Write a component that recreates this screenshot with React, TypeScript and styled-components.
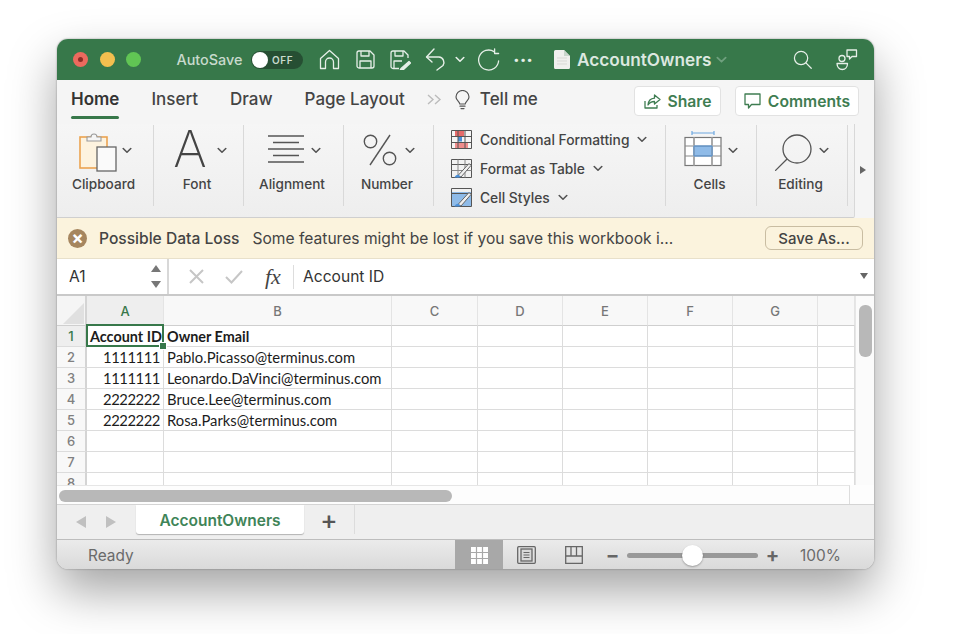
import styled, { createGlobalStyle } from 'styled-components';

const GREEN = '#37784a';
const UI_FONT = '"Inter", "Liberation Sans", sans-serif';
const CELL_FONT = '"Lato", "Open Sans", sans-serif';
const COLUMNS = '30px 77px 228px 86px 85px 85px 85px 85px 37px';

const GlobalStyle = createGlobalStyle`
    html, body {
        margin: 0;
        background: #fff;
        font-family: ${UI_FONT};
    }
`;

const Chevron = ({ size = 10, color = '#555' }: { size?: number; color?: string }) => (
    <svg width={size} height={size * 0.7} viewBox="0 0 10 7" fill="none">
        <path d="M1.2 1.5 5 5.2l3.8-3.7" stroke={color} strokeWidth="1.6" strokeLinecap="round" strokeLinejoin="round" />
    </svg>
);

const HomeIcon = () => (
    <svg width="21" height="21" viewBox="0 0 21 21" fill="none" stroke="#e6efe8" strokeWidth="1.3" strokeLinejoin="round">
        <path d="M1.5 9.5 10.5 1.5l9 8v10h-5v-6.5a4 4 0 0 0-8 0V19.5h-5z" />
    </svg>
);

const SaveIcon = () => (
    <svg width="19" height="19" viewBox="0 0 19 19" fill="none" stroke="#e6efe8" strokeWidth="1.3" strokeLinejoin="round">
        <path d="M1 3a2 2 0 0 1 2-2h11l4 4v11a2 2 0 0 1-2 2H3a2 2 0 0 1-2-2z" />
        <path d="M5 1v5h8V1M4 18v-7h11v7" />
    </svg>
);

const SaveAsIcon = () => (
    <svg width="21" height="20" viewBox="0 0 21 20" fill="none" stroke="#e6efe8" strokeWidth="1.3" strokeLinejoin="round">
        <path d="M9 18.5H3a2 2 0 0 1-2-2V3a2 2 0 0 1 2-2h11l4 4v3" />
        <path d="M5 1v5h8V1M4 18v-7h8" />
        <path d="m11 18.5 8-7 1.5 1.5-7.5 7-3 .5z" fill="#e6efe8" />
    </svg>
);

const UndoIcon = () => (
    <svg width="21" height="23" viewBox="0 0 21 23" fill="none" stroke="#e6efe8" strokeWidth="1.4" strokeLinecap="round" strokeLinejoin="round">
        <path d="M9 1 1.5 9 7 14" />
        <path d="M2 9h12a5.5 5.5 0 0 1 4 8.500L12 22" />
    </svg>
);

const RedoIcon = () => (
    <svg width="23" height="23" viewBox="0 0 23 23" fill="none" stroke="#e6efe8" strokeWidth="1.3" strokeLinecap="round" strokeLinejoin="round">
        <path d="M17 3.6A10 10 0 1 0 21.6 13" />
        <path d="M17.6 0.8V5.5h4" />
    </svg>
);

const DocIcon = () => (
    <svg width="16" height="19" viewBox="0 0 16 19">
        <path d="M0 1.5A1.5 1.5 0 0 1 1.5 0H10l6 6v11.5a1.5 1.5 0 0 1-1.5 1.5h-13A1.5 1.5 0 0 1 0 17.5z" fill="#f0f0ee" />
        <path d="M10 0v6h6z" fill="#c9d6cc" />
        <path d="M3 8h10M3 11h10M3 14h10" stroke="#d9d9d6" strokeWidth="1" />
    </svg>
);

const SearchIcon = ({ size, color, sw }: { size: number; color: string; sw: number }) => (
    <svg width={size} height={size} viewBox="0 0 20 20" fill="none" stroke={color} strokeWidth={sw} strokeLinecap="round">
        <circle cx="8.5" cy="8.5" r="7" />
        <path d="m13.6 13.6 5.6 5.6" />
    </svg>
);

const CoauthorIcon = () => (
    <svg width="22" height="22" viewBox="0 0 22 22" fill="none" stroke="#e6efe8" strokeWidth="1.3" strokeLinejoin="round">
        <circle cx="6" cy="9.5" r="3" />
        <path d="M1 14.5h10.5c0 3.5-2.2 6-5.2 6S1 18 1 14.5z" />
        <path d="M11 1h9.5v6.5h-4.5l-2.5 2.5V7.5H11z" />
    </svg>
);

const ShareIcon = () => (
    <svg width="17" height="15" viewBox="0 0 17 15" fill="none" stroke="#3f7d52" strokeWidth="1.3" strokeLinejoin="round">
        <path d="M1 7v7h12v-3" />
        <path d="M10.5 1 16 5.5 10.5 10V7.5C7.5 7.5 5.5 8.5 4 11c.3-3.8 2.5-6.500 6.5-6.800z" />
    </svg>
);

const CommentIcon = () => (
    <svg width="17" height="16" viewBox="0 0 17 16" fill="none" stroke="#3f7d52" strokeWidth="1.3" strokeLinejoin="round">
        <path d="M1 1h15v10.5H7.5L4.5 15v-3.5H1z" />
    </svg>
);

const OverflowIcon = () => (
    <svg width="15" height="11" viewBox="0 0 15 11" fill="none" stroke="#bcbcbc" strokeWidth="1.4">
        <path d="m1 1 5 4.5L1 10M8 1l5 4.5L8 10" />
    </svg>
);

const BulbIcon = () => (
    <svg width="15" height="20" viewBox="0 0 15 20" fill="none" stroke="#555" strokeWidth="1.2" strokeLinecap="round">
        <path d="M4.8 14C4.6 11.5 1 10.5 1 7a6.5 6.5 0 0 1 13 0c0 3.5-3.6 4.5-3.8 7z" />
        <path d="M5 16.2h5M6 18.6h3" />
    </svg>
);

const ClipboardIcon = () => (
    <svg width="38" height="40" viewBox="0 0 38 40" fill="none">
        <rect x="1" y="5" width="27" height="31" fill="#fdf3df" stroke="#eba350" strokeWidth="1.6" />
        <path d="M8 9V5h4a3 3 0 0 1 6 0h4v4z" fill="#f5f5f5" stroke="#9a9a9a" strokeWidth="1.1" />
        <rect x="18" y="15" width="19" height="24" fill="#fafafa" stroke="#666" strokeWidth="1.3" />
    </svg>
);

const AlignIcon = () => (
    <svg width="38" height="28" viewBox="0 0 38 28" stroke="#555" strokeWidth="1.3">
        <path d="M1 1h36M6 7.5h26M1 14h36M6 20.5h26M1 27h36" />
    </svg>
);

const PercentIcon = () => (
    <svg width="34" height="32" viewBox="0 0 34 32" fill="none" stroke="#555" strokeWidth="1.4">
        <circle cx="7.5" cy="7.5" r="6.2" />
        <circle cx="26.5" cy="24.5" r="6.2" />
        <path d="M27 1 7 31" />
    </svg>
);

const CondFormatIcon = () => (
    <svg width="21" height="19" viewBox="0 0 21 19" fill="none">
        <rect x="4" y="1" width="9" height="5" fill="#e66b6b" />
        <rect x="7" y="6.5" width="4" height="5" fill="#4a90d9" />
        <rect x="4" y="12" width="13" height="6" fill="#ef8d8d" />
        <path d="M.5.5h20v18H.5zM.5 6.5h20M.5 12.5h20M7 .5v18M14 .5v18" stroke="#555" strokeWidth="1" />
    </svg>
);

const TableBrushIcon = ({ filled }: { filled: boolean }) => (
    <svg width="21" height="19" viewBox="0 0 21 19" fill="none">
        {filled && <rect x="1" y="4" width="19" height="14" fill="#8fbbe8" />}
        <path d="M.5.5h20v18H.5zM.5 5.5h20" stroke="#555" strokeWidth="1" />
        {!filled && <path d="M.5 11.5h20M7 .5v18M14 .5v18" stroke="#888" strokeWidth="1" />}
        <path d="M7 16.5 18 4.5l2 2L10 18z" fill="#f0f0f0" stroke="#666" strokeWidth="1" />
        <path d="M3.5 18.5c1-2 2.5-3 4-2.5l2 1.5-1 1z" fill="#4a90d9" />
    </svg>
);

const CellsIcon = () => (
    <svg width="38" height="36" viewBox="0 0 38 36" fill="none">
        <path d="M8 2h22M8 0v4M30 0v4" stroke="#6fa8e0" strokeWidth="1.2" />
        <rect x="1" y="6.5" width="36" height="28" fill="#fff" stroke="#777" strokeWidth="1.2" />
        <rect x="10" y="15" width="18" height="10" fill="#8fbbe8" />
        <path d="M1 15h36M1 25h36" stroke="#8a8a8a" strokeWidth="1.2" />
        <path d="M10 6.5v28M28 6.5v28" stroke="#aaa" strokeWidth="2" />
        <path d="M10 15h18v10H10z" stroke="#4a90d9" strokeWidth="1" />
    </svg>
);

const CancelIcon = () => (
    <svg width="15" height="15" viewBox="0 0 15 15" fill="none" stroke="#c6c6c6" strokeWidth="2">
        <path d="m1 1 13 13M14 1 1 14" />
    </svg>
);

const CheckIcon = () => (
    <svg width="18" height="14" viewBox="0 0 18 14" fill="none" stroke="#c6c6c6" strokeWidth="2">
        <path d="m1 7 5.5 5.5L17 1" />
    </svg>
);

const NormalViewIcon = () => (
    <svg width="17" height="17" viewBox="0 0 17 17">
        <rect width="17" height="17" fill="#fff" />
        <path d="M0 5.5h17M0 11.5h17M5.5 0v17M11.5 0v17" stroke="#a8a8a8" strokeWidth="1.2" />
    </svg>
);

const PageViewIcon = () => (
    <svg width="19" height="18" viewBox="0 0 19 18" fill="none" stroke="#666" strokeWidth="1.3">
        <rect x=".7" y=".7" width="17.6" height="16.6" rx="1" />
        <rect x="4" y="3" width="11" height="12" fill="#d8d8d8" />
        <path d="M6.5 6.5h6M6.5 9h6M6.5 11.5h6" strokeWidth="1" />
    </svg>
);

const BreakViewIcon = () => (
    <svg width="18" height="18" viewBox="0 0 18 18" fill="none" stroke="#666" strokeWidth="1.3">
        <path d="M.7.7h16.6v16.6H.7zM.7 10h16.6M6 .7V10M11.5.7V10" />
    </svg>
);

const columnLabels = ['A', 'B', 'C', 'D', 'E', 'F', 'G', ''];

const rows: [string, string][] = [
    ['Account ID', 'Owner Email'],
    ['1111111', 'Pablo.Picasso@terminus.com'],
    ['1111111', 'Leonardo.DaVinci@terminus.com'],
    ['2222222', 'Bruce.Lee@terminus.com'],
    ['2222222', 'Rosa.Parks@terminus.com'],
    ['', ''],
    ['', ''],
    ['', ''],
];

export default function App() {
    return (
        <>
            <GlobalStyle />
            <Page>
                <Window>
                    <TitleBar>
                        <Light $color="#ec6a5e"><LightDot /></Light>
                        <Light $color="#f4bf4f" />
                        <Light $color="#61c554" />
                        <AutoSave>AutoSave</AutoSave>
                        <Toggle>
                            <ToggleKnob />
                            OFF
                        </Toggle>
                        <TitleSlot $w={36} $ml={8}><HomeIcon /></TitleSlot>
                        <TitleSlot $w={36}><SaveIcon /></TitleSlot>
                        <TitleSlot $w={35}><SaveAsIcon /></TitleSlot>
                        <TitleSlot $w={34}><UndoIcon /></TitleSlot>
                        <TitleSlot $w={16}><Chevron color="#e6efe8" /></TitleSlot>
                        <TitleSlot $w={36} $ml={2}><RedoIcon /></TitleSlot>
                        <Dots>···</Dots>
                        <TitleSlot $w={16} $ml={14}><DocIcon /></TitleSlot>
                        <DocTitle>AccountOwners</DocTitle>
                        <TitleSlot $w={12} $ml={4}><Chevron size={11} color="#6fa07e" /></TitleSlot>
                        <TitleRight>
                            <TitleSlot $w={20}><SearchIcon size={19} color="#e6efe8" sw={1.3} /></TitleSlot>
                            <TitleSlot $w={22}><CoauthorIcon /></TitleSlot>
                        </TitleRight>
                    </TitleBar>

                    <TabRow>
                        <Tab $active>Home</Tab>
                        <Tab>Insert</Tab>
                        <Tab>Draw</Tab>
                        <Tab>Page Layout</Tab>
                        <OverflowSlot><OverflowIcon /></OverflowSlot>
                        <BulbSlot><BulbIcon /></BulbSlot>
                        <TellMe>Tell me</TellMe>
                        <TabActions>
                            <ActionButton $w={87}><ShareIcon />Share</ActionButton>
                            <ActionButton $w={124}><CommentIcon />Comments</ActionButton>
                        </TabActions>
                    </TabRow>

                    <RibbonWrap>
                        <Ribbon>
                            <BigGroup $w={97}>
                                <BigIconRow $gap={5}><ClipboardIcon /><Chevron /></BigIconRow>
                                <GroupLabel>Clipboard</GroupLabel>
                            </BigGroup>
                            <BigGroup $w={90}>
                                <BigIconRow><FontGlyph>A</FontGlyph><Chevron /></BigIconRow>
                                <GroupLabel>Font</GroupLabel>
                            </BigGroup>
                            <BigGroup $w={100}>
                                <BigIconRow>
                                    <IconLift $by={6}><AlignIcon /></IconLift>
                                    <Chevron />
                                </BigIconRow>
                                <GroupLabel>Alignment</GroupLabel>
                            </BigGroup>
                            <BigGroup $w={90}>
                                <BigIconRow $gap={8}>
                                    <IconLift $by={4}><PercentIcon /></IconLift>
                                    <Chevron />
                                </BigIconRow>
                                <GroupLabel>Number</GroupLabel>
                            </BigGroup>
                            <StyleGroup>
                                <StyleRow><CondFormatIcon />Conditional Formatting<Chevron /></StyleRow>
                                <StyleRow><TableBrushIcon filled={false} />Format as Table<Chevron /></StyleRow>
                                <StyleRow><TableBrushIcon filled />Cell Styles<Chevron /></StyleRow>
                            </StyleGroup>
                            <BigGroup $w={91}>
                                <BigIconRow><IconLift $by={6}><CellsIcon /></IconLift><Chevron /></BigIconRow>
                                <GroupLabel>Cells</GroupLabel>
                            </BigGroup>
                            <BigGroup $w={91}>
                                <BigIconRow $gap={5}>
                                    <MirroredSearch><SearchIcon size={40} color="#555" sw={0.65} /></MirroredSearch>
                                    <Chevron />
                                </BigIconRow>
                                <GroupLabel>Editing</GroupLabel>
                            </BigGroup>
                        </Ribbon>
                        <RibbonMore />
                    </RibbonWrap>

                    <Warning>
                        <WarningIcon>×</WarningIcon>
                        <WarningTitle>Possible Data Loss</WarningTitle>
                        <WarningText>Some features might be lost if you save this workbook i...</WarningText>
                        <SaveAs>Save As...</SaveAs>
                    </Warning>

                    <FormulaBar>
                        <NameBox>
                            A1
                            <Stepper>
                                <StepUp />
                                <StepDown />
                            </Stepper>
                        </NameBox>
                        <FormulaMark $ml={18}><CancelIcon /></FormulaMark>
                        <FormulaMark $ml={20}><CheckIcon /></FormulaMark>
                        <Fx>fx</Fx>
                        <FormulaValue>Account ID</FormulaValue>
                        <FormulaArrow />
                    </FormulaBar>

                    <GridArea>
                        <Sheet>
                            <HeaderRow>
                                <Corner><CornerMark /></Corner>
                                {columnLabels.map((label, i) => (
                                    <ColumnHead key={i} $active={label === 'A'}>{label}</ColumnHead>
                                ))}
                            </HeaderRow>
                            {rows.map(([id, email], i) => (
                                <Row key={i}>
                                    <RowHead $active={i === 0}>{i + 1}</RowHead>
                                    <Cell $bold={i === 0} $right={i > 0}>{id}</Cell>
                                    <Cell $bold={i === 0}>{email}</Cell>
                                    <Cell /><Cell /><Cell /><Cell /><Cell /><Cell />
                                </Row>
                            ))}
                            <Selection><FillHandle /></Selection>
                        </Sheet>
                        <VScroll><VThumb /></VScroll>
                    </GridArea>

                    <HScroll>
                        <HTrack><HThumb /></HTrack>
                    </HScroll>

                    <SheetBar>
                        <SheetArrow $dir="left" />
                        <SheetArrow $dir="right" />
                        <SheetTab>AccountOwners</SheetTab>
                        <AddSheet>+</AddSheet>
                    </SheetBar>

                    <StatusBar>
                        <Ready>Ready</Ready>
                        <ViewButton $active><NormalViewIcon /></ViewButton>
                        <ViewButton><PageViewIcon /></ViewButton>
                        <ViewButton><BreakViewIcon /></ViewButton>
                        <ZoomMark $ml={8}>−</ZoomMark>
                        <ZoomTrack><ZoomThumb /></ZoomTrack>
                        <ZoomMark $ml={7}>+</ZoomMark>
                        <ZoomValue>100%</ZoomValue>
                    </StatusBar>
                </Window>
            </Page>
        </>
    );
}

const Page = styled.div`
    width: 956px;
    height: 634px;
    padding: 39px 0 0 57px;
    box-sizing: border-box;
    overflow: hidden;
`;

const Window = styled.div`
    width: 817px;
    height: 530px;
    display: flex;
    flex-direction: column;
    border-radius: 11px;
    overflow: hidden;
    background: #f4f4f4;
    box-shadow: 0 22px 48px rgba(0, 0, 0, 0.36), 0 0 2px rgba(0, 0, 0, 0.4);
`;

const TitleBar = styled.div`
    height: 41px;
    flex: none;
    display: flex;
    align-items: center;
    padding: 0 16px;
    background: ${GREEN};
    color: #e6efe8;
`;

const Light = styled.div<{ $color: string }>`
    width: 15px;
    height: 15px;
    margin-right: 11.5px;
    border-radius: 50%;
    background: ${({ $color }) => $color};
    display: flex;
    align-items: center;
    justify-content: center;
`;

const LightDot = styled.div`
    width: 5px;
    height: 5px;
    border-radius: 50%;
    background: #8d2c25;
`;

const AutoSave = styled.span`
    margin-left: 24px;
    width: 66px;
    font-size: 14.4px;
    font-weight: 500;
    white-space: nowrap;
    color: #c8dacd;
`;

const Toggle = styled.div`
    margin-left: 8.5px;
    width: 52px;
    height: 18px;
    flex: none;
    box-sizing: border-box;
    padding: 1px 0 0 1px;
    display: flex;
    align-items: center;
    gap: 4px;
    border-radius: 9px;
    background: #264f33;
    font-size: 10px;
    font-weight: 600;
    letter-spacing: 0.6px;
    color: #c8dacd;
`;

const ToggleKnob = styled.div`
    width: 16px;
    height: 16px;
    border-radius: 50%;
    background: #fff;
    margin-top: -1px;
`;

const TitleSlot = styled.div<{ $w: number; $ml?: number }>`
    width: ${({ $w }) => $w}px;
    margin-left: ${({ $ml = 0 }) => $ml}px;
    flex: none;
    display: flex;
    align-items: center;
    justify-content: center;
`;

const Dots = styled.span`
    width: 34px;
    flex: none;
    text-align: center;
    font-size: 20px;
    font-weight: 700;
    line-height: 1;
    color: #e6efe8;
`;

const DocTitle = styled.span`
    margin-left: 7px;
    font-size: 17.2px;
    font-weight: 600;
    color: #dde8e0;
    white-space: nowrap;
`;

const TitleRight = styled.div`
    margin-left: auto;
    display: flex;
    align-items: center;
    gap: 24px;
`;

const TabRow = styled.div`
    height: 44px;
    flex: none;
    display: flex;
    align-items: center;
    padding: 0 15px 0 14px;
    background: #f5f5f5;
`;

const Tab = styled.div<{ $active?: boolean }>`
    position: relative;
    margin-right: 32px;
    padding-bottom: 6px;
    font-size: 17px;
    font-weight: ${({ $active }) => ($active ? 600 : 500)};
    color: ${({ $active }) => ($active ? '#333' : '#444')};
    white-space: nowrap;

    ${({ $active }) =>
        $active &&
        `
        &::after {
            content: '';
            position: absolute;
            left: 0;
            right: 0;
            bottom: -4px;
            height: 3px;
            border-radius: 2px;
            background: ${GREEN};
        }
    `}
`;

const OverflowSlot = styled.div`
    display: flex;
    margin: 0 13px 6px -10px;
`;

const BulbSlot = styled.div`
    display: flex;
    margin-bottom: 5px;
`;

const TellMe = styled.span`
    margin: 0 0 6px 10px;
    font-size: 17px;
    font-weight: 500;
    color: #444;
`;

const TabActions = styled.div`
    margin-left: auto;
    margin-top: -2px;
    display: flex;
    gap: 14px;
`;

const ActionButton = styled.div<{ $w: number }>`
    width: ${({ $w }) => $w}px;
    height: 30px;
    box-sizing: border-box;
    display: flex;
    align-items: center;
    justify-content: center;
    gap: 7px;
    background: #fff;
    border: 1px solid #e2e2e2;
    border-radius: 4px;
    font-size: 15.7px;
    font-weight: 600;
    color: #3f7d52;
`;

const RibbonWrap = styled.div`
    height: 94px;
    flex: none;
    display: flex;
    background: #f5f5f5;
`;

const Ribbon = styled.div`
    width: 798px;
    height: 94px;
    flex: none;
    box-sizing: border-box;
    display: flex;
    align-items: flex-start;
    padding-top: 1px;
    background: linear-gradient(#f6f6f6, #eeeeee);
    border-right: 1px solid #d8d8d8;
    border-bottom: 1px solid #cfcfcf;
    border-bottom-right-radius: 2px;
`;

const BigGroup = styled.div<{ $w: number }>`
    width: ${({ $w }) => $w}px;
    height: 81px;
    flex: none;
    box-sizing: border-box;
    display: flex;
    flex-direction: column;
    align-items: center;
    padding-top: 7px;
    border-right: 1px solid #d9d9d9;
`;

const BigIconRow = styled.div<{ $gap?: number }>`
    height: 40px;
    display: flex;
    align-items: center;
    gap: ${({ $gap = 6 }) => $gap}px;

    > svg:last-child {
        margin-bottom: 4px;
    }
`;

const IconLift = styled.div<{ $by: number }>`
    display: flex;
    margin-bottom: ${({ $by }) => $by}px;
`;

const GroupLabel = styled.div`
    margin: 4px 3px 0 0;
    font-size: 13.6px;
    line-height: 17px;
    font-weight: 500;
    color: #444;
`;

const FontGlyph = styled.span`
    font-size: 51px;
    font-weight: 200;
    line-height: 40px;
    height: 40px;
    color: #444;
    margin: 0 4px 6px 3px;
`;

const MirroredSearch = styled.div`
    display: flex;
    transform: scaleX(-1);
    margin-left: -2px;
`;

const StyleGroup = styled.div`
    width: 232px;
    height: 87px;
    flex: none;
    box-sizing: border-box;
    padding-left: 17px;
    display: grid;
    grid-auto-rows: 29px;
    position: relative;

    &::after {
        content: '';
        position: absolute;
        top: 0;
        right: 0;
        width: 1px;
        height: 81px;
        background: #d9d9d9;
    }
`;

const StyleRow = styled.div`
    display: flex;
    align-items: center;
    gap: 8px;
    font-size: 13.8px;
    font-weight: 500;
    color: #444;
    white-space: nowrap;
`;

const RibbonMore = styled.div`
    margin: 42px 0 0 5px;
    width: 0;
    height: 0;
    border-left: 6px solid #666;
    border-top: 4.5px solid transparent;
    border-bottom: 4.5px solid transparent;
`;

const Warning = styled.div`
    height: 41px;
    flex: none;
    box-sizing: border-box;
    display: flex;
    align-items: center;
    padding: 0 11px;
    background: #fbf3dd;
    border-bottom: 1px solid #e8e0ca;
    color: #444;
`;

const WarningIcon = styled.div`
    width: 19px;
    height: 19px;
    flex: none;
    border-radius: 50%;
    background: #a6865f;
    color: #fff;
    font-size: 18px;
    font-weight: 700;
    line-height: 18px;
    text-align: center;
`;

const WarningTitle = styled.span`
    margin-left: 12px;
    font-size: 15.6px;
    font-weight: 500;
`;

const WarningText = styled.span`
    margin-left: 13px;
    font-size: 15.6px;
    white-space: nowrap;
`;

const SaveAs = styled.div`
    margin-left: auto;
    width: 98px;
    height: 24px;
    box-sizing: border-box;
    display: flex;
    align-items: center;
    justify-content: center;
    border: 1px solid #c9bda2;
    border-radius: 6px;
    font-size: 15px;
    font-weight: 500;
`;

const FormulaBar = styled.div`
    height: 37px;
    flex: none;
    box-sizing: border-box;
    display: flex;
    align-items: center;
    background: #fff;
    border-bottom: 2px solid #c9c9c9;
    position: relative;
`;

const NameBox = styled.div`
    width: 112px;
    height: 35px;
    flex: none;
    box-sizing: border-box;
    display: flex;
    align-items: center;
    justify-content: space-between;
    padding: 0 6px 0 12px;
    border-right: 2px solid #d8d8d8;
    font-size: 15.6px;
    font-weight: 400;
    color: #333;
`;

const Stepper = styled.div`
    display: flex;
    flex-direction: column;
    gap: 9px;
`;

const StepUp = styled.div`
    border-left: 5px solid transparent;
    border-right: 5px solid transparent;
    border-bottom: 7px solid #777;
`;

const StepDown = styled(StepUp)`
    border-bottom: 0;
    border-top: 7px solid #777;
`;

const FormulaMark = styled.span<{ $ml: number }>`
    margin-left: ${({ $ml }) => $ml}px;
    width: 18px;
    display: flex;
    justify-content: center;
`;

const Fx = styled.span`
    margin-left: 22px;
    width: 29px;
    box-sizing: border-box;
    border-right: 1px solid #ddd;
    font-family: 'Liberation Serif', serif;
    font-style: italic;
    font-size: 22px;
    line-height: 24px;
    color: #444;
`;

const FormulaValue = styled.span`
    margin-left: 9px;
    font-size: 15.6px;
    color: #333;
`;

const FormulaArrow = styled.div`
    position: absolute;
    right: 6px;
    top: 14px;
    border-left: 4.5px solid transparent;
    border-right: 4.5px solid transparent;
    border-top: 6px solid #666;
`;

const GridArea = styled.div`
    height: 189px;
    flex: none;
    display: flex;
    background: #fff;
`;

const Sheet = styled.div`
    position: relative;
    width: 798px;
    flex: none;
    overflow: hidden;
`;

const HeaderRow = styled.div`
    height: 30px;
    display: grid;
    grid-template-columns: ${COLUMNS};
`;

const Corner = styled.div`
    box-sizing: border-box;
    background: #f5f5f5;
    border-right: 2px solid #d4d4d4;
    border-bottom: 1px solid #cfcfcf;
    display: flex;
    align-items: flex-end;
    justify-content: flex-end;
    padding: 0 1px 1px 0;
`;

const CornerMark = styled.div`
    border-left: 21px solid transparent;
    border-bottom: 21px solid #e0e0e0;
`;

const ColumnHead = styled.div<{ $active?: boolean }>`
    box-sizing: border-box;
    display: flex;
    align-items: center;
    justify-content: center;
    padding-top: 1px;
    background: ${({ $active }) => ($active ? '#eeeeee' : '#f8f8f8')};
    border-right: 1px solid #e4e4e4;
    border-bottom: 1px solid #cfcfcf;
    font-size: 13px;
    font-weight: 500;
    color: ${({ $active }) => ($active ? GREEN : '#777')};
`;

const Row = styled.div`
    height: 21px;
    display: grid;
    grid-template-columns: ${COLUMNS};
    grid-template-rows: 21px;
`;

const RowHead = styled.div<{ $active?: boolean }>`
    box-sizing: border-box;
    display: flex;
    align-items: center;
    justify-content: center;
    background: ${({ $active }) => ($active ? '#eeeeee' : '#f8f8f8')};
    border-right: 2px solid #d4d4d4;
    border-bottom: 1px solid #dcdcdc;
    font-size: 13px;
    font-weight: 500;
    color: ${({ $active }) => ($active ? GREEN : '#808080')};
`;

const Cell = styled.div<{ $bold?: boolean; $right?: boolean }>`
    box-sizing: border-box;
    min-width: 0;
    height: 21px;
    padding: ${({ $bold }) => ($bold ? 1 : 0)}px 3px 0;
    border-right: 1px solid #dcdcdc;
    border-bottom: 1px solid #dcdcdc;
    font-family: ${CELL_FONT};
    font-size: ${({ $bold }) => ($bold ? 14.4 : 14.8)}px;
    letter-spacing: ${({ $right }) => ($right ? -0.45 : 0)}px;
    line-height: 20px;
    font-weight: ${({ $bold }) => ($bold ? 700 : 400)};
    color: #1c1c1c;
    text-align: ${({ $right }) => ($right ? 'right' : 'left')};
    white-space: nowrap;
`;

const Selection = styled.div`
    position: absolute;
    left: 29px;
    top: 28px;
    width: 78px;
    height: 23px;
    box-sizing: border-box;
    border: 2px solid ${GREEN};
`;

const FillHandle = styled.div`
    position: absolute;
    right: -5px;
    bottom: -5px;
    width: 6px;
    height: 6px;
    background: ${GREEN};
    border: 1px solid #fff;
`;

const VScroll = styled.div`
    flex: 1;
    background: #fbfbfb;
    border-left: 1px solid #e6e6e6;
    padding: 9px 2px 0 3px;
`;

const VThumb = styled.div`
    height: 52px;
    border-radius: 6px;
    background: #b8b8b8;
`;

const HScroll = styled.div`
    height: 20px;
    flex: none;
    box-sizing: border-box;
    background: #fdfdfd;
    border-bottom: 1px solid #d4d4d4;
    padding-right: 24px;
`;

const HTrack = styled.div`
    height: 100%;
    box-sizing: border-box;
    padding: 4px 0 0 2px;
    border-right: 1px solid #ddd;
    border-top: 1px solid #e6e6e6;
`;

const HThumb = styled.div`
    width: 393px;
    height: 12px;
    border-radius: 6px;
    background: #b8b8b8;
`;

const SheetBar = styled.div`
    height: 35px;
    flex: none;
    box-sizing: border-box;
    display: flex;
    align-items: flex-start;
    padding-left: 19px;
    background: #efefef;
    border-bottom: 1px solid #bdbdbd;
`;

const SheetArrow = styled.div<{ $dir: 'left' | 'right' }>`
    margin: 11px 20px 0 0;
    width: 0;
    height: 0;
    border-top: 6.5px solid transparent;
    border-bottom: 6.5px solid transparent;
    ${({ $dir }) => ($dir === 'left' ? 'border-right: 10px solid #c0c0c0;' : 'border-left: 10px solid #c0c0c0;')}
`;

const SheetTab = styled.div`
    width: 168px;
    height: 29px;
    box-sizing: border-box;
    display: flex;
    align-items: center;
    justify-content: center;
    padding-top: 2px;
    background: #fff;
    border-radius: 0 0 3px 3px;
    box-shadow: 0 1px 1px rgba(0, 0, 0, 0.25);
    font-size: 15.5px;
    font-weight: 600;
    color: #3f8458;
`;

const AddSheet = styled.div`
    width: 51px;
    height: 29px;
    box-sizing: border-box;
    display: flex;
    align-items: center;
    justify-content: center;
    border-right: 1px solid #dcdcdc;
    font-size: 26px;
    font-weight: 500;
    color: #555;
`;

const StatusBar = styled.div`
    height: 30px;
    flex: none;
    display: flex;
    align-items: center;
    background: linear-gradient(#ebebeb, #d9d9d9);
    font-size: 15.4px;
    color: #6a6a6a;
`;

const Ready = styled.span`
    margin-left: 31px;
    width: 367px;
    flex: none;
`;

const ViewButton = styled.div<{ $active?: boolean }>`
    width: ${({ $active }) => ($active ? 48 : 47)}px;
    height: 30px;
    flex: none;
    display: flex;
    align-items: center;
    justify-content: center;
    background: ${({ $active }) => ($active ? '#a8a8a8' : 'transparent')};
`;

const ZoomMark = styled.span<{ $ml: number }>`
    margin-left: ${({ $ml }) => $ml}px;
    width: 15px;
    text-align: center;
    font-size: 20px;
    font-weight: 700;
    line-height: 1;
    color: #666;
`;

const ZoomTrack = styled.div`
    position: relative;
    margin-left: 7px;
    width: 131px;
    height: 5px;
    border-radius: 3px;
    background: #999;
`;

const ZoomThumb = styled.div`
    position: absolute;
    left: 54.5px;
    top: -8px;
    width: 21px;
    height: 21px;
    border-radius: 50%;
    background: #fff;
    box-shadow: 0 1px 2px rgba(0, 0, 0, 0.3);
`;

const ZoomValue = styled.span`
    margin-left: 20px;
`;
